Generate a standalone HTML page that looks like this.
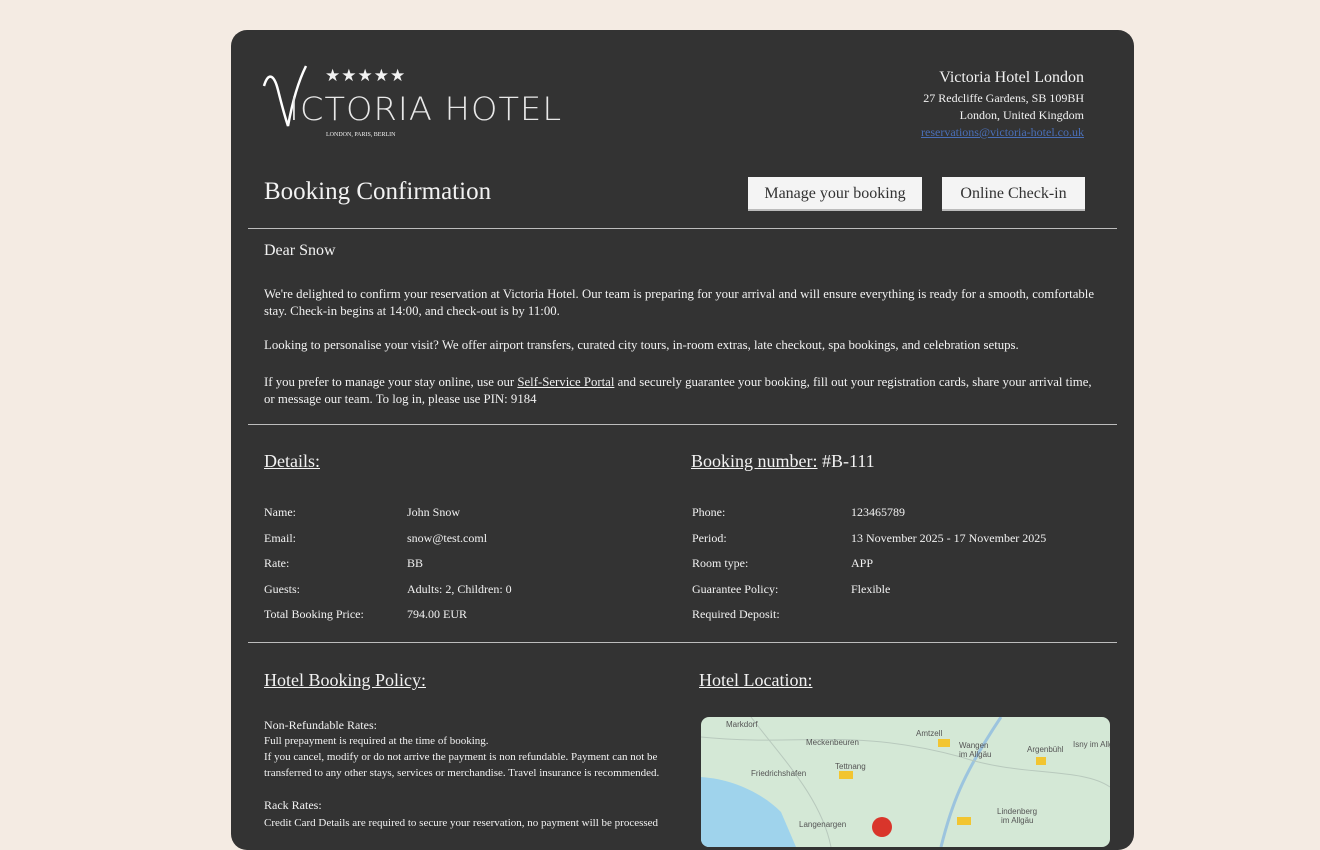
<!DOCTYPE html>
<html><head><meta charset="utf-8"><style>
*{margin:0;padding:0;box-sizing:border-box}
body{width:1320px;height:826px;overflow:hidden;background:#f4ebe3;font-family:"Liberation Serif",serif;color:#f2f2f2;position:relative}
.card{position:absolute;left:231px;top:30px;width:903px;height:820px;background:#333333;border-radius:16px}
.a{position:absolute;white-space:nowrap}
.hr{position:absolute;left:248px;width:869px;height:1px;background:#bdbdbd}
.btn{position:absolute;top:177px;height:34px;background:#f4f4f4;color:#333;font-size:16px;text-align:center;line-height:33px;border-bottom:2px solid #bbb}
.p{font-size:12.8px;line-height:17px}
.l{font-size:12px}
u{text-decoration:underline}
</style></head><body>
<div class="card"></div>
<svg class="a" style="left:262px;top:64px" width="50" height="66" viewBox="0 0 50 66"><path d="M2 22 C6 8 12 10 16 26 C20 42 24 56 26 62 C30 40 36 18 44 2" fill="none" stroke="#fff" stroke-width="2.5"/></svg>
<div class="a" style="left:325px;top:66px;font-size:17px;letter-spacing:1px">★★★★★</div>
<div class="a" style="left:289px;top:90px;font-family:'DejaVu Sans','Liberation Sans',sans-serif;font-size:32px;font-weight:200;letter-spacing:1px;color:#e8e8e8;transform:scaleX(1.05);transform-origin:left">ICTORIA HOTEL</div>
<div class="a" style="left:326px;top:132px;font-size:6px">LONDON, PARIS, BERLIN</div>
<div class="a" style="right:236px;top:69px;font-size:16px;text-align:right">Victoria Hotel London</div>
<div class="a" style="right:236px;top:91px;font-size:12px">27 Redcliffe Gardens, SB 109BH</div>
<div class="a" style="right:236px;top:108px;font-size:12px">London, United Kingdom</div>
<div class="a" style="right:236px;top:125px;font-size:12px;color:#4a6fb8;text-decoration:underline">reservations@victoria-hotel.co.uk</div>
<div class="a" style="left:264px;top:178px;font-size:25px">Booking Confirmation</div>
<div class="btn" style="left:748px;width:174px">Manage your booking</div>
<div class="btn" style="left:942px;width:143px">Online Check-in</div>
<div class="hr" style="top:228px"></div>
<div class="a" style="left:264px;top:242px;font-size:16px">Dear Snow</div>
<div class="a p" style="left:264px;top:286px">We're delighted to confirm your reservation at Victoria Hotel. Our team is preparing for your arrival and will ensure everything is ready for a smooth, comfortable<br>stay. Check-in begins at 14:00, and check-out is by 11:00.</div>
<div class="a p" style="left:264px;top:337px">Looking to personalise your visit? We offer airport transfers, curated city tours, in-room extras, late checkout, spa bookings, and celebration setups.</div>
<div class="a p" style="left:264px;top:374px">If you prefer to manage your stay online, use our <u>Self-Service Portal</u> and securely guarantee your booking, fill out your registration cards, share your arrival time,<br>or message our team. To log in, please use PIN: 9184</div>
<div class="hr" style="top:424px"></div>
<div class="a" style="left:264px;top:451px;font-size:18px"><u>Details:</u></div>
<div class="a" style="left:691px;top:451px;font-size:18px"><u>Booking number:</u> #B-111</div>
<div class="a l" style="left:264px;top:500px;line-height:25.5px">Name:<br>Email:<br>Rate:<br>Guests:<br>Total Booking Price:</div>
<div class="a l" style="left:407px;top:500px;line-height:25.5px">John Snow<br>snow@test.coml<br>BB<br>Adults: 2, Children: 0<br>794.00 EUR</div>
<div class="a l" style="left:692px;top:500px;line-height:25.5px">Phone:<br>Period:<br>Room type:<br>Guarantee Policy:<br>Required Deposit:</div>
<div class="a l" style="left:851px;top:500px;line-height:25.5px">123465789<br>13 November 2025 - 17 November 2025<br>APP<br>Flexible</div>
<div class="hr" style="top:642px"></div>
<div class="a" style="left:264px;top:670px;font-size:18px"><u>Hotel Booking Policy:</u></div>
<div class="a" style="left:699px;top:670px;font-size:18px"><u>Hotel Location:</u></div>
<div class="a" style="left:264px;top:718px;font-size:12px;line-height:15px">Non-Refundable Rates:<br><span style="font-size:11px">Full prepayment is required at the time of booking.<br>If you cancel, modify or do not arrive the payment is non refundable. Payment can not be<br>transferred to any other stays, services or merchandise. Travel insurance is recommended.</span></div>
<div class="a" style="left:264px;top:797px;font-size:12px;line-height:17px">Rack Rates:<br><span style="font-size:11px">Credit Card Details are required to secure your reservation, no payment will be processed</span></div>
<div class="a" style="left:701px;top:717px;width:409px;height:130px;border-radius:8px;overflow:hidden;background:#d4e8d6">
<svg width="409" height="130" viewBox="0 0 409 130">
<path d="M0 60 C30 62 60 75 80 95 L95 130 L0 130Z" fill="#9fd3ec"/>
<path d="M240 130 C250 90 260 60 300 0" stroke="#9cc4de" stroke-width="3" fill="none"/>
<path d="M0 20 C100 30 150 10 260 40 C320 60 380 50 409 70" stroke="#b8c9bd" fill="none"/>
<path d="M50 0 C80 40 120 80 130 130" stroke="#b8c9bd" fill="none"/>
<circle cx="181" cy="110" r="10" fill="#d9352b"/>
<g font-family="Liberation Sans,sans-serif" font-size="8" fill="#555">
<text x="25" y="10">Markdorf</text><text x="105" y="28">Meckenbeuren</text><text x="215" y="19">Amtzell</text>
<text x="258" y="31">Wangen</text><text x="258" y="40">im Allgäu</text><text x="326" y="35">Argenbühl</text><text x="372" y="30">Isny im Allgä</text>
<text x="134" y="52">Tettnang</text><text x="50" y="59">Friedrichshafen</text><text x="98" y="110">Langenargen</text>
<text x="296" y="97">Lindenberg</text><text x="300" y="106">im Allgäu</text></g>
<rect x="237" y="22" width="12" height="8" fill="#f2c531"/><rect x="138" y="54" width="14" height="8" fill="#f2c531"/><rect x="335" y="40" width="10" height="8" fill="#f2c531"/><rect x="256" y="100" width="14" height="8" fill="#f2c531"/>
</svg></div>
</body></html>
